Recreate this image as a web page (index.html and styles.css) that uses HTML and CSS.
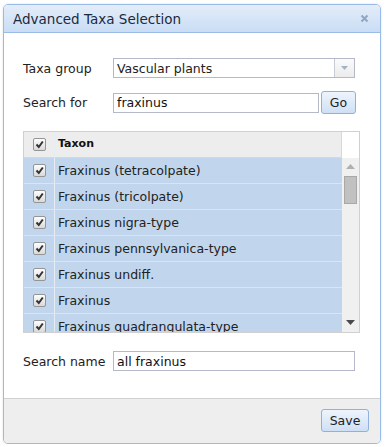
FILE: index.html
```html
<!DOCTYPE html>
<html lang="en">
<head>
  <meta charset="UTF-8">
  <title>Advanced Taxa Selection</title>
  <link rel="stylesheet" href="styles.css">
</head>
<body>
  <div class="window">
    <div class="window-header">
      <span class="window-title">Advanced Taxa Selection</span>
      <span class="window-close">
        <svg width="9" height="9" viewBox="0 0 9 9"><path d="M1.5 1.5 L7.5 7.5 M7.5 1.5 L1.5 7.5" stroke="#8ea6c6" stroke-width="2"/></svg>
      </span>
    </div>

    <div class="window-body">
      <div class="field-row">
        <label class="field-label">Taxa group</label>
        <div class="combo">
          <span class="combo-value">Vascular plants</span>
          <span class="combo-trigger">
            <svg width="7" height="4" viewBox="0 0 7 4"><path d="M0 0 L7 0 L3.5 4 Z" fill="#9fb3cb"/></svg>
          </span>
        </div>
      </div>

      <div class="field-row search-row">
        <label class="field-label">Search for</label>
        <input type="text" class="text-input search-input" value="fraxinus">
        <button class="btn btn-go">Go</button>
      </div>

      <div class="grid">
        <div class="grid-header">
          <div class="cell-check"><span class="checkbox"><svg width="9" height="9" viewBox="0 0 9 9"><path d="M1.5 4.5 L3.8 7 L7.8 1.5" stroke="#333" stroke-width="2" fill="none"/></svg></span></div>
          <div class="cell-name header-name">Taxon</div>
          <div class="grid-corner"></div>
        </div>
        <div class="grid-body">
          <div class="grid-rows" id="rows"></div>
          <div class="scrollbar">
            <svg class="scroll-up" width="9" height="5" viewBox="0 0 9 5"><path d="M0 5 L9 5 L4.5 0 Z" fill="#b0b0b0"/></svg>
            <div class="scroll-thumb"></div>
            <svg class="scroll-down" width="9" height="5" viewBox="0 0 9 5"><path d="M0 0 L9 0 L4.5 5 Z" fill="#4a4a4a"/></svg>
          </div>
        </div>
      </div>

      <div class="field-row name-row">
        <label class="field-label">Search name</label>
        <input type="text" class="text-input name-input" value="all fraxinus">
      </div>
    </div>

    <div class="window-footer">
      <button class="btn btn-save">Save</button>
    </div>
  </div>

  <script>
    // Build the taxon rows
    const taxa = [
      'Fraxinus (tetracolpate)',
      'Fraxinus (tricolpate)',
      'Fraxinus nigra-type',
      'Fraxinus pennsylvanica-type',
      'Fraxinus undiff.',
      'Fraxinus',
      'Fraxinus quadrangulata-type'
    ];
    const rows = document.getElementById('rows');
    taxa.forEach(function(name) {
      const row = document.createElement('div');
      row.className = 'grid-row';
      row.innerHTML =
        '<div class="cell-check"><span class="checkbox"><svg width="9" height="9" viewBox="0 0 9 9"><path d="M1.5 4.5 L3.8 7 L7.8 1.5" stroke="#333" stroke-width="2" fill="none"/></svg></span></div>' +
        '<div class="cell-name"></div>';
      row.querySelector('.cell-name').textContent = name;
      rows.appendChild(row);
    });
  </script>
</body>
</html>
```

FILE: styles.css
```css
body {
  margin: 0;
  background: #fff;
  font-family: "DejaVu Sans", Verdana, sans-serif;
  font-size: 12.5px;
  color: #222;
}
.window {
  box-sizing: border-box;
  margin: 4px 0 0 3px;
  width: 378px;
  height: 440px;
  border: 1px solid #99bbe8;
  border-radius: 5px;
  display: flex;
  flex-direction: column;
  overflow: hidden;
  box-shadow: 0 0 2px rgba(0, 0, 0, 0.15);
}
.window-header {
  height: 27px;
  border-bottom: 1px solid #99bbe8;
  background: linear-gradient(#e4edf9, #c9ddf5);
  display: flex;
  align-items: center;
  justify-content: space-between;
  padding: 0 11px 0 9px;
}
.window-title {
  font-size: 13.5px;
  color: #1c2a3c;
  padding-top: 1px;
}
.window-close {
  display: flex;
}
.window-body {
  flex: 1;
  padding: 25px 0 0 19px;
}
.field-row {
  display: flex;
  align-items: center;
}
.field-label {
  width: 90px;
  flex-shrink: 0;
}
.combo {
  box-sizing: border-box;
  width: 242px;
  height: 20px;
  border: 1px solid #b5b8c8;
  display: flex;
  align-items: center;
}
.combo-value {
  flex: 1;
  padding-left: 3px;
}
.combo-trigger {
  width: 19px;
  height: 18px;
  border-left: 1px solid #c8ccd6;
  background: linear-gradient(#fafafa, #ececec);
  display: flex;
  align-items: center;
  justify-content: center;
}
.search-row {
  margin-top: 13px;
  height: 23px;
}
.text-input {
  box-sizing: border-box;
  height: 20px;
  border: 1px solid #b5b8c8;
  padding: 0 3px;
  font-family: inherit;
  font-size: 12.5px;
  color: #111;
  background: #fff;
  outline: none;
}
.search-input {
  width: 206px;
}
.name-input {
  width: 242px;
}
.btn {
  box-sizing: border-box;
  height: 23px;
  border: 1px solid #8fb1dc;
  border-radius: 3px;
  background: linear-gradient(#eef4fc, #cfe0f5);
  font-family: inherit;
  font-size: 12.5px;
  color: #222;
  padding: 0;
}
.btn-go {
  width: 35px;
  margin-left: 2px;
}
.btn-save {
  width: 48px;
}
.grid {
  box-sizing: border-box;
  margin-top: 17px;
  width: 337px;
  height: 202px;
  border: 1px solid #d0d0d0;
  display: flex;
  flex-direction: column;
}
.grid-header {
  height: 26px;
  display: flex;
  flex-shrink: 0;
}
.grid-header .cell-check,
.grid-header .cell-name {
  background: #ededed;
  border-bottom: 1px solid #d8d8d8;
}
.header-name {
  font-size: 11px;
  font-weight: bold;
  color: #111;
  align-self: stretch;
  padding-top: 5px;
  box-sizing: border-box;
}
.grid-corner {
  width: 17px;
  background: #fff;
  border-left: 1px solid #d8d8d8;
}
.cell-check {
  width: 30px;
  flex-shrink: 0;
  border-right: 1px solid #e4ecf4;
  display: flex;
  align-items: center;
  justify-content: center;
}
.cell-name {
  flex: 1;
  padding-left: 3px;
}
.grid-body {
  flex: 1;
  display: flex;
  min-height: 0;
}
.grid-rows {
  flex: 1;
  overflow: hidden;
}
.grid-row {
  height: 25px;
  display: flex;
  align-items: center;
  background: #c1d6ec;
  border-bottom: 1px solid #dce5ef;
}
.grid-row .cell-check {
  align-self: stretch;
}
.checkbox {
  box-sizing: border-box;
  width: 13px;
  height: 13px;
  border: 1px solid #959595;
  border-radius: 2px;
  background: linear-gradient(#fdfdfd, #d9d9d9);
  display: flex;
  align-items: center;
  justify-content: center;
}
.scrollbar {
  width: 17px;
  background: #f0f0f0;
  display: flex;
  flex-direction: column;
  align-items: center;
}
.scroll-up {
  margin-top: 6px;
}
.scroll-thumb {
  box-sizing: border-box;
  margin-top: 7px;
  width: 13px;
  height: 28px;
  background: #c1c1c1;
  border: 1px solid #a8a8a8;
}
.scroll-down {
  margin-top: auto;
  margin-bottom: 7px;
}
.name-row {
  margin-top: 18px;
}
.window-footer {
  height: 45px;
  border-top: 1px solid #d0d0d0;
  background: #eeeeee;
  display: flex;
  justify-content: flex-end;
  align-items: flex-start;
  padding: 10px 11px 0 0;
  box-sizing: border-box;
  flex-shrink: 0;
}
```
